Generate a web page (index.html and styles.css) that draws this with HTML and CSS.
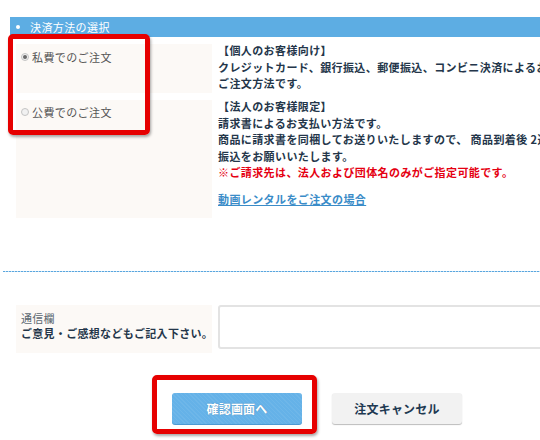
FILE: index.html
```html
<!DOCTYPE html>
<html lang="ja">
<head>
<meta charset="utf-8">
<title>決済方法の選択</title>
<link rel="stylesheet" href="styles.css">
</head>
<body>
<div class="page">
  <div class="wrap">
    <div class="section-head"><span class="head-dot"></span>決済方法の選択</div>
    <div class="pay-grid">
      <div class="opt-cell opt-first">
        <label class="opt"><span class="radio checked"></span>私費でのご注文</label>
      </div>
      <div class="desc">
        <p class="strong">【個人のお客様向け】<br>クレジットカード、銀行振込、郵便振込、コンビニ決済によるお支払いの<br>ご注文方法です。</p>
      </div>
      <div class="opt-cell opt-second">
        <label class="opt"><span class="radio"></span>公費でのご注文</label>
      </div>
      <div class="desc">
        <p class="strong">【法人のお客様限定】<br>請求書によるお支払い方法です。<br>商品に請求書を同梱してお送りいたしますので、 商品到着後 2週間以内にお<br>振込をお願いいたします。</p>
        <p class="warn">※ご請求先は、法人および団体名のみがご指定可能です。</p>
        <p class="link-line"><a class="rental-link" href="#">動画レンタルをご注文の場合</a></p>
      </div>
    </div>
    <div class="dots"></div>
    <div class="comm-grid">
      <div class="comm-label">
        <div class="comm-title">通信欄</div>
        <div class="comm-sub">ご意見・ご感想などもご記入下さい。</div>
      </div>
      <div class="comm-field"><textarea class="comm-input"></textarea></div>
    </div>
    <div class="actions">
      <button class="btn btn-confirm" type="button">確認画面へ</button>
      <button class="btn btn-cancel" type="button">注文キャンセル</button>
    </div>
  </div>
  <div class="mark mark-options"></div>
  <div class="mark mark-confirm"></div>
</div>
</body>
</html>
```
FILE: styles.css
```css
html, body {
  margin: 0;
  padding: 0;
  width: 540px;
  height: 440px;
  overflow: hidden;
  background: #ffffff;
}

body {
  font-family: "Noto Sans CJK JP", "Noto Sans", sans-serif;
  font-size: 11px;
  color: #24364a;
}

.page {
  position: relative;
  width: 540px;
  height: 440px;
}

.wrap {
  width: 614px;
  margin-left: 10px;
  padding-top: 17px;
}

.section-head {
  height: 20px;
  line-height: 20px;
  background: #5dade3;
  color: #ffffff;
  padding-left: 6px;
  letter-spacing: 0.4px;
  display: flex;
  align-items: center;
}

.head-dot {
  width: 4px;
  height: 4px;
  border-radius: 50%;
  background: #ffffff;
  margin-right: 10px;
}

.pay-grid {
  margin-top: 7px;
  margin-left: 6px;
  display: grid;
  grid-template-columns: 196px 1fr;
  grid-template-rows: 49px 118px;
  column-gap: 6px;
  row-gap: 7px;
}

.opt-cell {
  background: #fcf9f6;
  padding-left: 5px;
}

.opt-first { padding-top: 5px; }
.opt-second { padding-top: 4px; }

.opt {
  display: flex;
  align-items: center;
  height: 16px;
  color: #555555;
  letter-spacing: 0.4px;
}

.radio {
  width: 8px;
  height: 8px;
  border: 1px solid #c4c4c4;
  border-radius: 50%;
  background: #f1f1f1;
  margin-right: 3px;
  display: inline-flex;
  align-items: center;
  justify-content: center;
  box-sizing: border-box;
}

.radio.checked::after {
  content: "";
  width: 4px;
  height: 4px;
  border-radius: 50%;
  background: #6a6a6a;
}

.desc {
  margin-top: -2px;
  white-space: nowrap;
  line-height: 16.5px;
  letter-spacing: 0.4px;
}

.desc p { margin: 0; }

.strong { font-weight: bold; }

.warn {
  font-weight: bold;
  color: #e50012;
}

.link-line { margin-top: 10px !important; }

.rental-link {
  color: #3a8cc8;
  font-weight: bold;
  text-decoration: underline;
}

.dots {
  margin-top: 53px;
  margin-left: -7px;
  width: 540px;
  height: 1px;
  background-image: repeating-linear-gradient(90deg, #5aa6de 0 2px, #c4e1f5 2px 3px);
}

.comm-grid {
  margin-top: 33px;
  margin-left: 6px;
  display: grid;
  grid-template-columns: 196px 1fr;
  column-gap: 6px;
  align-items: start;
}

.comm-label {
  height: 48px;
  background: #fcf9f6;
  padding: 6px 0 0 5px;
  box-sizing: border-box;
  line-height: 15px;
  letter-spacing: 0.3px;
}

.comm-title { color: #5c6872; }

.comm-sub {
  font-weight: bold;
  color: #24364a;
  white-space: nowrap;
}

.comm-input {
  display: block;
  width: 100%;
  height: 44px;
  box-sizing: border-box;
  border: 2px solid #e3e3e3;
  border-radius: 3px;
  background: #ffffff;
  resize: none;
  margin: 0;
}

.actions {
  margin-top: 40px;
  display: flex;
  justify-content: center;
  gap: 30px;
}

.btn {
  width: 130px;
  height: 31px;
  border: none;
  border-radius: 3px;
  font-family: "Noto Sans CJK JP", "Noto Sans", sans-serif;
  font-size: 12px;
  font-weight: bold;
  letter-spacing: 0.2px;
  padding: 0;
}

.btn-confirm {
  background-color: #65b2e8;
  background-image: repeating-linear-gradient(45deg, rgba(255,255,255,0.06) 0 1px, transparent 1px 3px);
  color: #ffffff;
  box-shadow: 0 1px 0 #4c9ad3;
  text-shadow: 0 0 1px rgba(40,80,120,0.5);
}

.btn-cancel {
  background: #f2f2f2;
  color: #1f3a52;
  box-shadow: 0 1px 1px #bcbcbc;
}

.mark {
  position: absolute;
  border: 5px solid #e60000;
  border-radius: 5px;
  box-sizing: border-box;
  box-shadow: 1px 2px 3px rgba(0,0,0,0.35);
}

.mark-options {
  left: 8px;
  top: 34px;
  width: 142px;
  height: 101px;
}

.mark-confirm {
  left: 152px;
  top: 375px;
  width: 165px;
  height: 59px;
}
```
